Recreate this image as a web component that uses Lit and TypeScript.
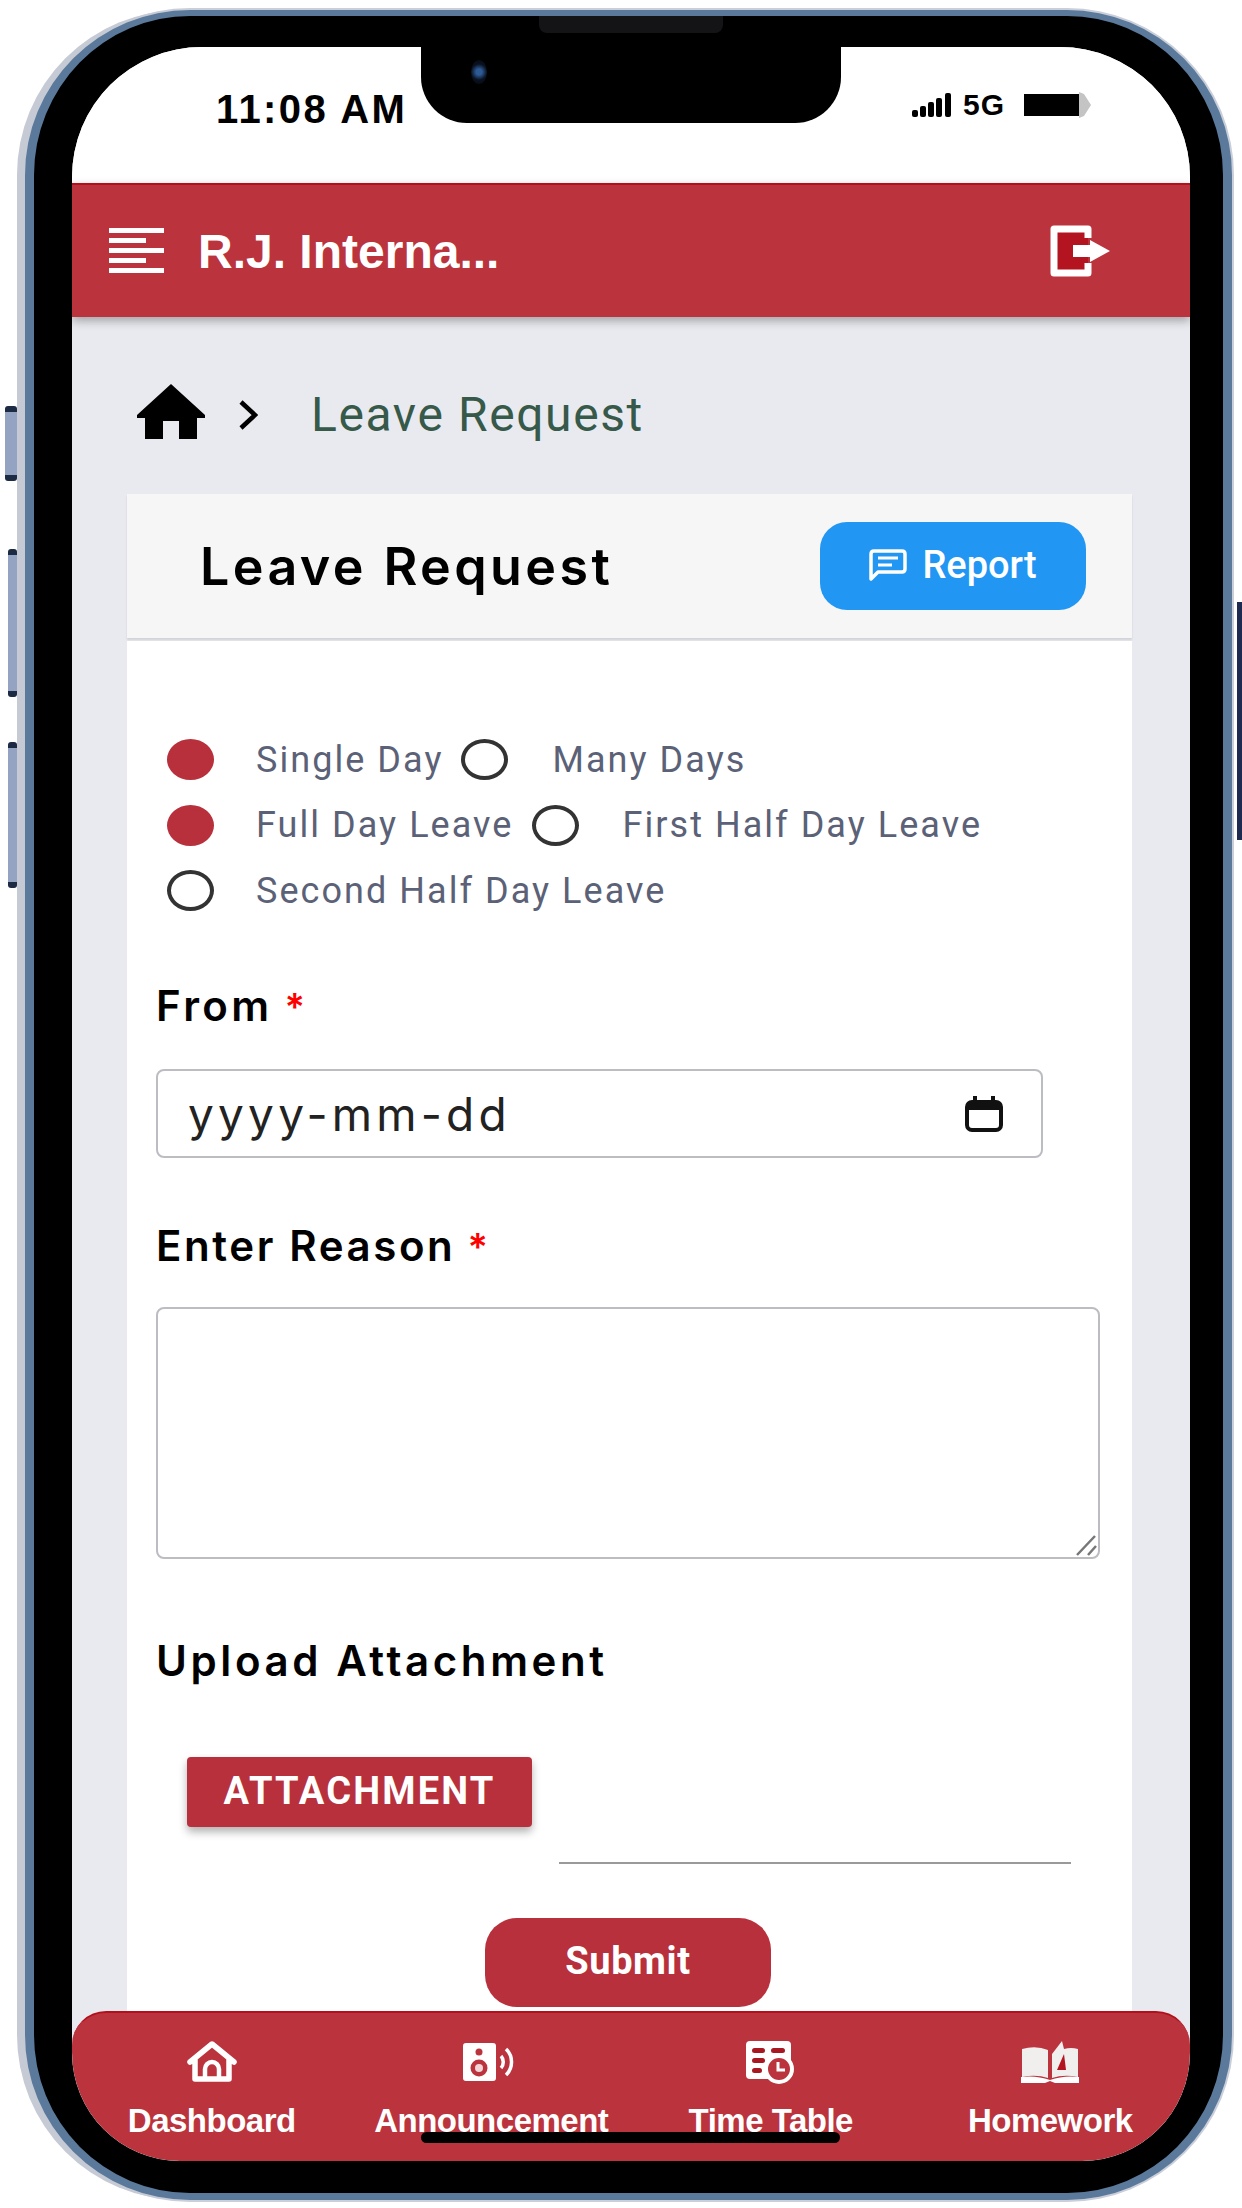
import { LitElement, html, css, svg } from 'lit';
import { customElement } from 'lit/decorators.js';

const RED = '#bb333c';

const navItems = [
  {
    label: 'Dashboard',
    icon: svg`<svg class="nav-icon" width="50" height="42" viewBox="0 0 50 42">
      <path d="M3 21 L25 3 L47 21 M8 18 V38 H42 V18" fill="none" stroke="#fff" stroke-width="5.5" stroke-linejoin="round" stroke-linecap="round"/>
      <path d="M18 38 V28 a7 7 0 0 1 14 0 V38" fill="none" stroke="#fff" stroke-width="4.5"/>
    </svg>`,
  },
  {
    label: 'Announcement',
    icon: svg`<svg class="nav-icon" width="56" height="42" viewBox="0 0 56 42">
      <rect x="0" y="2" width="33" height="38" rx="3" fill="#fff"/>
      <circle cx="16" cy="11" r="3.5" fill="${RED}"/>
      <circle cx="16" cy="27" r="8.5" fill="${RED}"/>
      <circle cx="16" cy="27" r="4" fill="#f3d5d8"/>
      <path d="M38 15 a9 9 0 0 1 0 12" fill="none" stroke="#fff" stroke-width="3.5"/>
      <path d="M43 8 a18 18 0 0 1 0 26" fill="none" stroke="#fff" stroke-width="3.5"/>
    </svg>`,
  },
  {
    label: 'Time Table',
    icon: svg`<svg class="nav-icon" width="52" height="44" viewBox="0 0 52 44">
      <rect x="1" y="1" width="45" height="38" rx="4" fill="#fff"/>
      <rect x="7" y="8" width="13" height="5" rx="2.5" fill="#a81822"/>
      <rect x="26" y="8" width="14" height="5" rx="2.5" fill="#a81822"/>
      <rect x="7" y="18" width="13" height="5" rx="2.5" fill="#a81822"/>
      <rect x="7" y="28" width="10" height="5" rx="2.5" fill="#a81822"/>
      <circle cx="34" cy="29" r="13" fill="${RED}" stroke="#fff" stroke-width="4"/>
      <path d="M33 22 V30 H40" fill="none" stroke="#fff" stroke-width="3"/>
    </svg>`,
  },
  {
    label: 'Homework',
    icon: svg`<svg class="nav-icon" width="58" height="44" viewBox="0 0 58 44">
      <path d="M1 9 Q15 5 27 10 V38 Q15 34 1 37 Z" fill="#f1eeee"/>
      <path d="M31 14 L41 1 L43 9 Q50 7 57 9 V37 Q43 34 31 38 Z" fill="#f1eeee"/>
      <path d="M36 30 L43 14 L45 30 Z" fill="#b3141f"/>
      <path d="M0 37 V43 H24 L29 41 L34 43 H58 V37 Q43 35 29 40 Q15 35 0 37Z" fill="#fff"/>
    </svg>`,
  },
];

@customElement('app-root')
export class AppRoot extends LitElement {
  static styles = css`
    :host {
      display: block;
      width: 1242px;
      height: 2208px;
      overflow: hidden;
      background: #fff;
      font-family: Roboto, "Liberation Sans", sans-serif;
    }
    * {
      box-sizing: border-box;
    }
    .page {
      padding: 10px 10px 0 25px;
    }
    .device {
      position: relative;
      height: 2190px;
      padding: 31px 33px 32px 38px;
      background: #000;
      border-style: solid;
      border-color: #5b7a9b;
      border-width: 6px 9px 7px 9px;
      border-radius: 165px;
      box-shadow: -8px 0 0 0 #c6cad4, 0 0 0 2px #c9ced9;
    }
    .side-btn {
      position: absolute;
      left: -26px;
      width: 9px;
      border-radius: 3px;
      background: #94a3c2;
      border-top: 6px solid #1d2a44;
      border-bottom: 6px solid #1d2a44;
    }
    .btn-mute {
      left: -29px;
      width: 12px;
      top: 390px;
      height: 75px;
    }
    .btn-up {
      top: 533px;
      height: 148px;
    }
    .btn-down {
      top: 726px;
      height: 146px;
    }
    .btn-power {
      left: 1203px;
      top: 586px;
      width: 5px;
      height: 238px;
      background: #1f2a50;
      border: none;
      border-radius: 0;
    }
    .notch {
      position: absolute;
      left: 387px;
      top: 0;
      width: 420px;
      height: 107px;
      background: #000;
      border-radius: 0 0 46px 46px;
      z-index: 5;
    }
    .speaker {
      position: absolute;
      left: 118px;
      top: 0;
      width: 184px;
      height: 17px;
      background: #141416;
      border-radius: 0 0 8px 8px;
    }
    .camera {
      position: absolute;
      left: 50px;
      top: 44px;
      width: 16px;
      height: 24px;
      border-radius: 50%;
      background: radial-gradient(circle, #2d5a94 0 20%, #0a1220 55%, #05070c 100%);
    }
    .home-bar {
      position: absolute;
      left: 387px;
      top: 2116px;
      width: 419px;
      height: 11px;
      background: #000;
      border-radius: 6px;
      z-index: 5;
    }
    .screen {
      display: flex;
      flex-direction: column;
      height: 100%;
      overflow: hidden;
      background: #e9eaef;
      border-radius: 130px 130px 108px 108px;
    }
    .status {
      display: flex;
      align-items: center;
      flex: none;
      height: 136px;
      padding: 0 99px 12px 144px;
      background: #fff;
      color: #000;
      font-family: "Liberation Sans", Arial, sans-serif;
      font-weight: 700;
    }
    .time {
      font-size: 40px;
      letter-spacing: 2.4px;
    }
    .status-right {
      display: flex;
      align-items: center;
      margin: 0 0 8px auto;
    }
    .net {
      margin: 0 19px 0 12px;
      font-size: 30px;
      letter-spacing: 1px;
    }
    .topbar {
      position: relative;
      display: flex;
      align-items: center;
      flex: none;
      height: 134px;
      padding: 0 80px 0 37px;
      background: #bb333c;
      border-top: 2px solid #b3101d;
      box-shadow: 0 4px 9px rgba(0, 0, 0, 0.3);
      color: #fff;
    }
    .brand {
      margin-left: 34px;
      font-family: "Liberation Sans", Arial, sans-serif;
      font-size: 48px;
      font-weight: 700;
    }
    .exit {
      margin-left: auto;
    }
    .content {
      display: flex;
      flex-direction: column;
      flex: 1;
      min-height: 0;
      padding: 0 58px 0 55px;
    }
    .crumbs {
      display: flex;
      align-items: center;
      flex: none;
      height: 177px;
      padding: 18px 0 0 10px;
    }
    .home {
      margin-bottom: 5px;
    }
    .chevron {
      margin-left: 33px;
    }
    .crumb-text {
      margin-left: 53px;
      color: #36594a;
      font-size: 48px;
      letter-spacing: 1.6px;
    }
    .card {
      flex: 1;
      min-height: 0;
      display: flex;
      flex-direction: column;
    }
    .card-head {
      display: flex;
      align-items: center;
      justify-content: space-between;
      flex: none;
      height: 144px;
      padding: 0 46px 0 73px;
      background: #f6f6f7;
      box-shadow: 0 2px 2px rgba(0, 0, 0, 0.1);
    }
    .card-title {
      color: #000;
      font-family: Inter, "Liberation Sans", sans-serif;
      font-size: 52px;
      font-weight: 600;
      letter-spacing: 3.4px;
    }
    .report {
      display: flex;
      align-items: center;
      justify-content: center;
      gap: 15px;
      width: 266px;
      height: 88px;
      padding-bottom: 3px;
      background: #2196f3;
      border-radius: 27px;
      color: #fff;
      font-size: 38px;
      font-weight: 500;
    }
    .card-body {
      flex: 1;
      display: flex;
      flex-direction: column;
      margin-top: 3px;
      padding: 98px 0 0 29px;
      background: #fff;
    }
    .choices {
      display: flex;
      flex-direction: column;
      gap: 24.5px;
      padding-left: 11px;
    }
    .choice-row {
      display: flex;
      height: 41px;
      gap: 18px;
    }
    .choice {
      display: flex;
      align-items: center;
      gap: 42px;
      color: #5b6176;
      font-size: 36px;
      letter-spacing: 2.05px;
      white-space: nowrap;
    }
    .choice + .choice {
      gap: 44px;
    }
    .radio {
      flex: none;
      width: 47px;
      height: 41px;
      border: 4px solid #333;
      border-radius: 50%;
      background: #fff;
    }
    .radio.on {
      background: #b8303b;
      border-color: #b8303b;
    }
    .label {
      height: 60px;
      color: #000;
      font-family: Inter, "Liberation Sans", sans-serif;
      font-size: 42px;
      font-weight: 600;
      line-height: 60px;
      letter-spacing: 2.6px;
      white-space: nowrap;
    }
    .star {
      margin-left: 12px;
      color: #f00;
      font-size: 38px;
    }
    .from-label {
      margin-top: 65px;
      letter-spacing: 3.4px;
    }
    .date {
      display: flex;
      align-items: center;
      justify-content: space-between;
      width: 887px;
      height: 89px;
      margin-top: 33px;
      padding: 0 38px 0 30px;
      border: 2.5px solid #bcbdc2;
      border-radius: 8px;
      color: #222;
      font-family: Inter, "Liberation Sans", sans-serif;
      font-size: 46px;
      letter-spacing: 4.2px;
    }
    .reason-label {
      margin-top: 58px;
    }
    .reason {
      display: flex;
      align-items: flex-end;
      justify-content: flex-end;
      width: 944px;
      height: 252px;
      margin-top: 31px;
      border: 2.5px solid #bcbdc2;
      border-radius: 8px;
    }
    .upload-label {
      margin-top: 72px;
      letter-spacing: 3.6px;
    }
    .attach {
      display: flex;
      align-items: center;
      justify-content: center;
      width: 345px;
      height: 70px;
      margin: 66px 0 0 31px;
      padding-bottom: 3px;
      background: #b8303b;
      border-radius: 4px;
      box-shadow: 0 5px 8px rgba(0, 0, 0, 0.3);
      color: #fff;
      font-size: 38px;
      font-weight: 700;
      letter-spacing: 2.2px;
    }
    .file-line {
      width: 512px;
      height: 2px;
      margin: 35px 0 0 403px;
      background: #9a9a9a;
    }
    .submit {
      display: flex;
      align-items: center;
      justify-content: center;
      width: 286px;
      height: 89px;
      margin: 54px 0 0 329px;
      padding-bottom: 4px;
      background: #b8303b;
      border-radius: 32px;
      color: #fff;
      font-size: 38px;
      font-weight: 700;
      letter-spacing: 0.6px;
    }
    .bottom-nav {
      display: grid;
      grid-template-columns: repeat(4, 1fr);
      flex: none;
      height: 150px;
      background: #bb333c;
      border-top: 2px solid #b3101d;
      border-radius: 34px 34px 108px 108px;
      color: #fff;
    }
    .nav-item {
      display: flex;
      flex-direction: column;
      align-items: center;
      padding-top: 27px;
      font-family: "Liberation Sans", Arial, sans-serif;
      font-size: 33px;
      font-weight: 700;
      white-space: nowrap;
    }
    .nav-icon {
      display: block;
      height: 44px;
    }
    .nav-item span {
      margin-top: 18px;
      letter-spacing: -0.5px;
    }
  `;

  private choice(text: string, on = false) {
    return html`<div class="choice"><div class="radio ${on ? 'on' : ''}"></div>${text}</div>`;
  }

  render() {
    return html`
      <div class="page">
        <div class="device">
          <div class="side-btn btn-mute"></div>
          <div class="side-btn btn-up"></div>
          <div class="side-btn btn-down"></div>
          <div class="side-btn btn-power"></div>
          <div class="notch">
            <div class="speaker"></div>
            <div class="camera"></div>
          </div>
          <div class="home-bar"></div>
          <div class="screen">
            <div class="status">
              <div class="time">11:08 AM</div>
              <div class="status-right">
                <svg width="39" height="24" viewBox="0 0 39 24" fill="#000">
                  <rect x="0" y="17" width="6" height="7" rx="2"/>
                  <rect x="8" y="13" width="6" height="11" rx="2"/>
                  <rect x="16" y="9" width="6" height="15" rx="2"/>
                  <rect x="24" y="5" width="6" height="19" rx="2"/>
                  <rect x="33" y="0" width="6" height="24" rx="2"/>
                </svg>
                <span class="net">5G</span>
                <svg width="67" height="26" viewBox="0 0 67 26">
                  <rect x="0" y="2" width="55" height="22" fill="#000"/>
                  <path d="M55 0 L60 2 L67 13 L60 24 L55 26Z" fill="#c4c4c4"/>
                </svg>
              </div>
            </div>
            <div class="topbar">
              <svg width="55" height="46" viewBox="0 0 55 46" fill="#fff">
                <rect x="0" y="0" width="55" height="5"/>
                <rect x="0" y="10" width="37" height="5"/>
                <rect x="0" y="20" width="55" height="5"/>
                <rect x="0" y="30" width="37" height="5"/>
                <rect x="0" y="40" width="55" height="5"/>
              </svg>
              <div class="brand">R.J. Interna...</div>
              <svg class="exit" width="60" height="52" viewBox="0 0 60 52">
                <path d="M38 13 V4 H4 V48 H38 V38" fill="#b3141f" stroke="#fff" stroke-width="7" stroke-linejoin="round"/>
                <path d="M23 20 H40 V15 L60 26 L40 37 V32 H23Z" fill="#fff"/>
              </svg>
            </div>
            <div class="content">
              <div class="crumbs">
                <svg class="home" width="68" height="56" viewBox="0 0 68 56" fill="#000">
                  <path d="M34 0 L68 31 L68 34 L60 34 L60 55 L42 55 L42 37 L26 37 L26 55 L8 55 L8 34 L0 34 L0 31Z"/>
                </svg>
                <svg class="chevron" width="20" height="30" viewBox="0 0 20 30">
                  <path d="M3 2 L17 15 L3 28" fill="none" stroke="#000" stroke-width="4.5"/>
                </svg>
                <div class="crumb-text">Leave Request</div>
              </div>
              <div class="card">
                <div class="card-head">
                  <div class="card-title">Leave Request</div>
                  <div class="report">
                    <svg width="38" height="32" viewBox="0 0 38 32">
                      <path d="M2 30 V5 Q2 2 5 2 H33 Q36 2 36 5 V20 Q36 23 33 23 H9Z" fill="none" stroke="#fff" stroke-width="3.5" stroke-linejoin="round"/>
                      <path d="M9 9 H29 M9 16 H23" stroke="#fff" stroke-width="3"/>
                    </svg>
                    Report
                  </div>
                </div>
                <div class="card-body">
                  <div class="choices">
                    <div class="choice-row">
                      ${this.choice('Single Day', true)}${this.choice('Many Days')}
                    </div>
                    <div class="choice-row">
                      ${this.choice('Full Day Leave', true)}${this.choice('First Half Day Leave')}
                    </div>
                    <div class="choice-row">${this.choice('Second Half Day Leave')}</div>
                  </div>
                  <div class="label from-label">From<span class="star">*</span></div>
                  <div class="date">
                    yyyy-mm-dd
                    <svg width="38" height="36" viewBox="0 0 38 36">
                      <rect x="2" y="6" width="34" height="28" rx="5" fill="none" stroke="#111" stroke-width="4"/>
                      <path d="M2 11 H36" stroke="#111" stroke-width="6"/>
                      <path d="M10 0 V6 M28 0 V6" stroke="#111" stroke-width="4"/>
                    </svg>
                  </div>
                  <div class="label reason-label">Enter Reason<span class="star">*</span></div>
                  <div class="reason">
                    <svg width="24" height="24" viewBox="0 0 24 24">
                      <path d="M3 22 L21 3 M14 22 L22 13" stroke="#777" stroke-width="2.5" fill="none"/>
                    </svg>
                  </div>
                  <div class="label upload-label">Upload Attachment</div>
                  <div class="attach">ATTACHMENT</div>
                  <div class="file-line"></div>
                  <div class="submit">Submit</div>
                </div>
              </div>
            </div>
            <div class="bottom-nav">
              ${navItems.map(
                (item) => html`<div class="nav-item">${item.icon}<span>${item.label}</span></div>`
              )}
            </div>
          </div>
        </div>
      </div>
    `;
  }
}
